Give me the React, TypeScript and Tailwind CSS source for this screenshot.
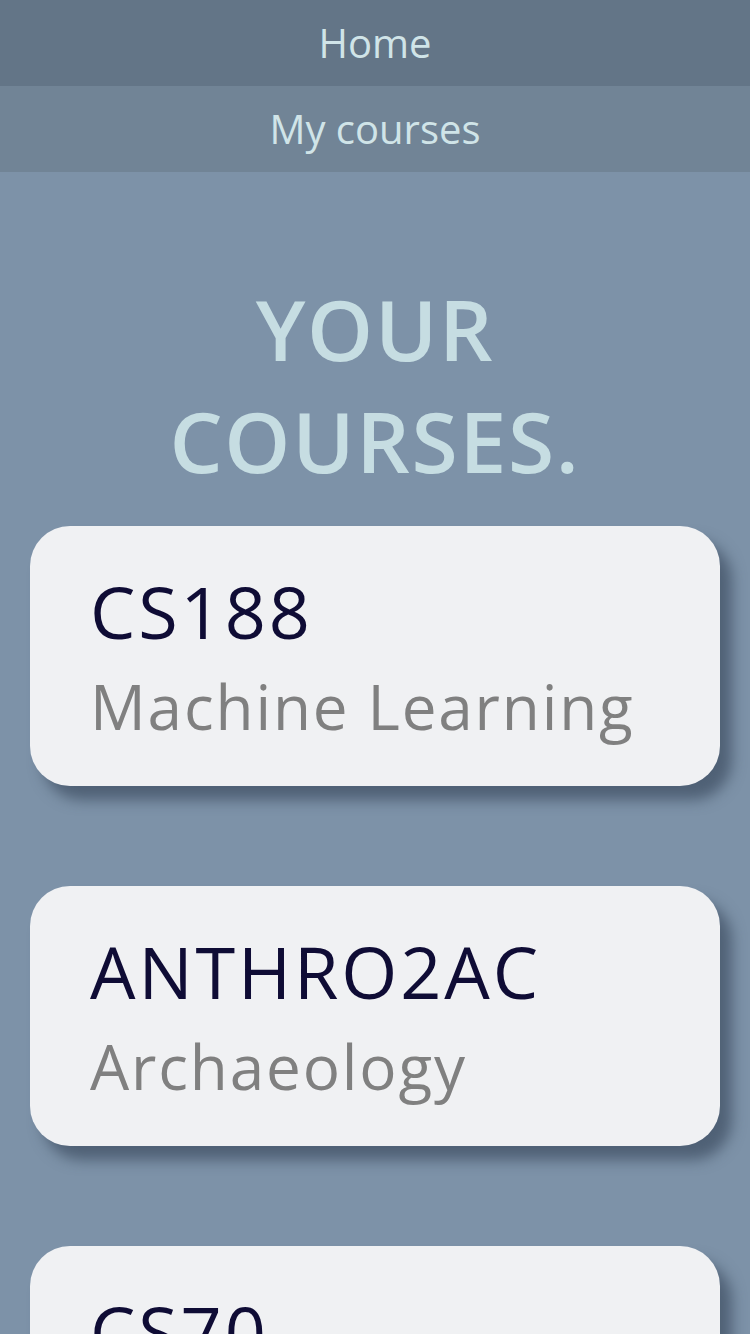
const courses = [
  { code: 'CS188', name: 'Machine Learning' },
  { code: 'ANTHRO2AC', name: 'Archaeology' },
  { code: 'CS70', name: 'Discrete Mathematics' },
]

export default function App() {
  return (
    <div className="min-h-screen bg-[#7d92a8] font-['Open_Sans',sans-serif]">
      <nav>
        <a href="#" className="flex h-[86px] items-center justify-center bg-[#637587] text-[40px] text-[#d0e4e8]">
          Home
        </a>
        <a href="#" className="flex h-[86px] items-center justify-center bg-[#718496] text-[40px] text-[#d0e4e8]">
          My courses
        </a>
      </nav>
      <main className="px-[30px] pt-[101px]">
        <h1 className="mx-auto mb-[29px] max-w-[480px] text-center text-[84px] font-semibold leading-[112px] tracking-[0.02em] text-[#c6dde2]">
          YOUR COURSES.
        </h1>
        <div className="flex flex-col gap-[100px]">
          {courses.map((c) => (
            <div
              key={c.code}
              className="h-[260px] overflow-hidden rounded-[40px] bg-[#f0f1f3] px-[60px] pt-[43px] shadow-[12px_14px_14px_rgba(55,70,90,0.65)]"
            >
              <div className="whitespace-nowrap text-[72px] leading-[84px] tracking-[0.04em] text-[#0f0c35]">{c.code}</div>
              <div className="mt-[17px] whitespace-nowrap text-[62px] leading-[72px] tracking-[0.03em] text-[#808080]">{c.name}</div>
            </div>
          ))}
        </div>
      </main>
    </div>
  )
}
